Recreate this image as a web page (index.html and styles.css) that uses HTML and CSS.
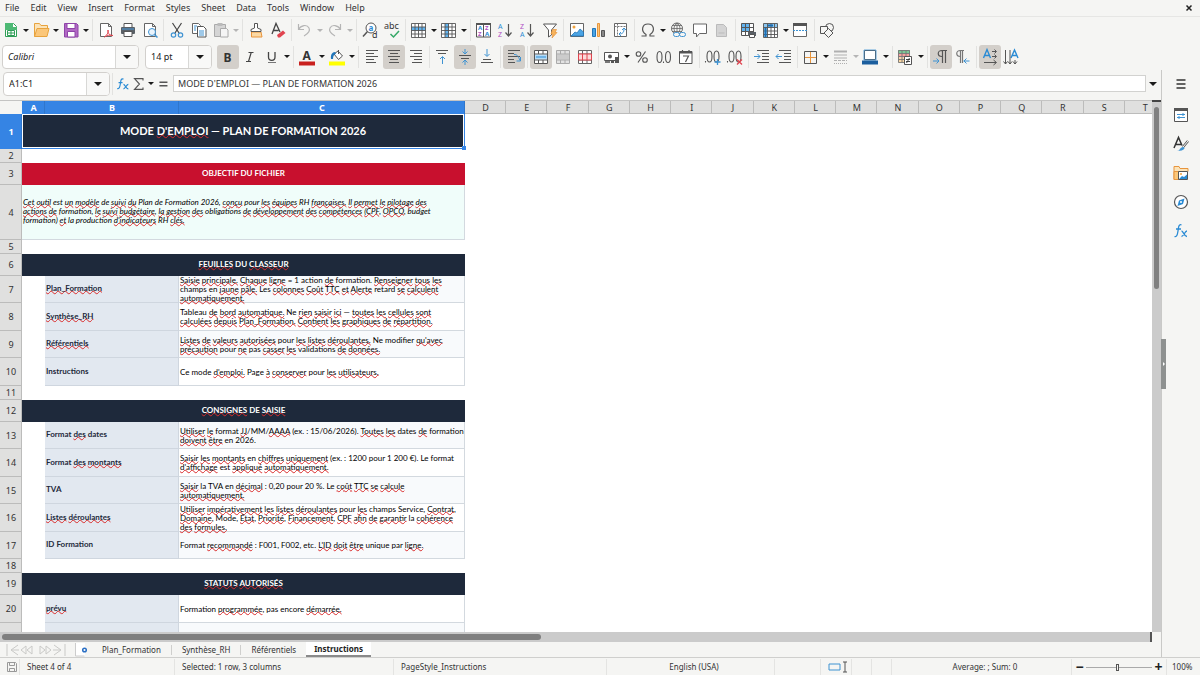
FILE: index.html
```html
<!DOCTYPE html>
<html lang="fr">
<head>
<meta charset="utf-8">
<title>Plan de formation 2026</title>
<link rel="stylesheet" href="styles.css">
</head>
<body>
<nav class="menubar">
  <button>File</button><button>Edit</button><button>View</button><button>Insert</button><button>Format</button><button>Styles</button><button>Sheet</button><button>Data</button><button>Tools</button><button>Window</button><button>Help</button>
  <button class="close" aria-label="Close document"><svg viewBox="0 0 8 8"><path d="M1.500 1.500l5 5M6.500 1.500l-5 5" stroke="#222" stroke-width="1.500"/></svg></button>
</nav>

<div class="toolbar standard">
  <button class="tb" aria-label="New"><svg viewBox="0 0 22 22"><path d="M5.500 4.500h8l3 3v10h-11z" fill="#fff" stroke="#2f9e57"/><path d="M5 4h8v4h4v3H5z" fill="#4db974"/><path d="M7.500 11.500h7v5h-7zM7.500 14h7M11 11.500v5" fill="none" stroke="#2f9e57"/></svg></button><button class="dd" aria-label="New options"></button>
  <button class="tb" aria-label="Open"><svg viewBox="0 0 22 22"><path d="M4.500 17.500v-13h5l1.500 2h6.500v3" fill="#fbe3b8" stroke="#e8a33d"/><path d="M4.500 17.500l2.500-8h12l-2 8z" fill="#fbc77a" stroke="#e8a33d"/></svg></button><button class="dd" aria-label="Open options"></button>
  <button class="tb" aria-label="Save"><svg viewBox="0 0 22 22"><path d="M4.500 4.500h12l1.500 1.500v12h-13.500z" fill="#b168c4" stroke="#8e44a8"/><path d="M7 4.500h8v5h-8zM7.500 12.500h7.500v5.500h-7.500z" fill="#fff" stroke="#8e44a8"/></svg></button><button class="dd" aria-label="Save options"></button>
  <span class="sep"></span>
  <button class="tb" aria-label="Export as PDF"><svg viewBox="0 0 22 22"><path d="M5.500 4.500h8l3 3v10h-11zM13.500 4.500v3h3" fill="#fff" stroke="#666"/><path d="M9.500 18c2.500-2 4-4 3.500-7 0 4 2 6 5 5.500-3-1-6 0-8.500 1.500z" fill="none" stroke="#e0444f"/></svg></button>
  <button class="tb" aria-label="Print"><svg viewBox="0 0 22 22"><path d="M7 8V4.500h8V8" fill="#fff" stroke="#555"/><rect x="4" y="8" width="14" height="7" rx="1" fill="#5a6066"/><path d="M7 12.500h8v5h-8z" fill="#fff" stroke="#555"/><path d="M5 10h12" stroke="#4a9bdc"/></svg></button>
  <button class="tb" aria-label="Print preview"><svg viewBox="0 0 22 22"><path d="M5.500 4.500h8l3 3v10h-11zM13.500 4.500v3h3" fill="#fff" stroke="#666"/><circle cx="13" cy="13" r="3.500" fill="#eaf4fc" stroke="#3f93d2"/><path d="M15.500 15.500l3 3" stroke="#3f93d2" stroke-width="1.500"/></svg></button>
  <span class="sep"></span>
  <button class="tb" aria-label="Cut"><svg viewBox="0 0 22 22" fill="none"><path d="M6.500 4l6.500 10M15.500 4L9 14" stroke="#444" stroke-width="1.200"/><circle cx="7.500" cy="16" r="2.200" stroke="#3f93d2" stroke-width="1.200"/><circle cx="14.500" cy="16" r="2.200" stroke="#3f93d2" stroke-width="1.200"/></svg></button>
  <button class="tb" aria-label="Copy"><svg viewBox="0 0 22 22"><path d="M4.500 4.500h6l2 2v8h-8z" fill="#fff" stroke="#666"/><path d="M9.500 7.500h6l2.500 2.500v8h-8.500z" fill="#fff" stroke="#555"/><path d="M6 7h3M6 9h2M6 11h2M11 12h5M11 14h5M11 16h5" stroke="#3f93d2"/></svg></button>
  <button class="tb off" aria-label="Paste" disabled><svg viewBox="0 0 22 22"><path d="M4.500 5.500h11v12h-11z" fill="#d5d5d5" stroke="#aaa"/><path d="M7.500 4h5v3h-5z" fill="#bbb"/><path d="M10.500 9.500h6l1.500 1.500v7h-7.500z" fill="#f5f5f5" stroke="#aaa"/></svg></button><button class="dd off" aria-label="Paste options" disabled></button>
  <span class="sep"></span>
  <button class="tb" aria-label="Clone formatting"><svg viewBox="0 0 22 22"><path d="M9.500 9V4.500h3V9l3.500 1.500v2h-10v-2z" fill="#fff" stroke="#555"/><path d="M6.500 13h9.500l1 5h-10.500z" fill="#fbd9a5" stroke="#e8953d"/><path d="M6 12.500h10" stroke="#555"/></svg></button>
  <button class="tb" aria-label="Clear formatting"><svg viewBox="0 0 22 22"><path d="M5 15l4-10.500L13 13M6.500 11.500h5" fill="none" stroke="#444" stroke-width="1.300"/><path d="M10 16l6-4.500 2.500 2.500-5.500 4.500h-2z" fill="#e0444f"/></svg></button>
  <span class="sep"></span>
  <button class="tb off" aria-label="Undo" disabled><svg viewBox="0 0 22 22" fill="none" stroke="#b5b5b5" stroke-width="1.200"><path d="M4.500 5v5.500H10M4.500 10.500C7 6 13 5 15 9c1.500 3-1.500 6-5 8"/></svg></button><button class="dd off" aria-label="Undo history" disabled></button>
  <button class="tb off" aria-label="Redo" disabled><svg viewBox="0 0 22 22" fill="none" stroke="#b5b5b5" stroke-width="1.200"><path d="M16.500 5v5.500H11M16.500 10.500C14 6 8 5 6 9c-1.500 3 1.500 6 5 8"/></svg></button><button class="dd off" aria-label="Redo history" disabled></button>
  <span class="sep"></span>
  <button class="tb" aria-label="Find and replace"><svg viewBox="0 0 22 22"><circle cx="12" cy="9" r="5" fill="#fff" stroke="#555"/><path d="M8.500 12.500L4 17.500" stroke="#555" stroke-width="1.500"/><text x="9.500" y="11.500" font-size="8" fill="#2a8bd4" font-weight="bold">a</text><text x="13" y="19" font-size="9" fill="#333">d</text></svg></button>
  <button class="tb" aria-label="Spelling"><svg viewBox="0 0 22 22"><text x="3" y="10" font-size="9" fill="#333">abc</text><path d="M9.500 15l3 3 5.500-6" fill="none" stroke="#35a867" stroke-width="1.500"/></svg></button>
  <span class="sep"></span>
  <button class="tb" aria-label="Row"><svg viewBox="0 0 22 22"><path d="M3.500 4.500h14v14h-14z" fill="#fff"/><path d="M3.500 8h14v3.500h-14z" fill="#62b3ee"/><path d="M3.500 4.500h14v14h-14zM3.500 8h14M3.500 11.500h14M3.500 15h14M7 4.500v14M10.500 4.500v14M14 4.500v14" fill="none" stroke="#555" stroke-width=".9"/></svg></button><button class="dd" aria-label="Row options"></button>
  <button class="tb" aria-label="Column"><svg viewBox="0 0 22 22"><path d="M3.500 4.500h14v14h-14z" fill="#fff"/><path d="M7 4.500h4v14h-4z" fill="#62b3ee"/><path d="M3.500 4.500h14v14h-14zM3.500 8h14M3.500 11.500h14M3.500 15h14M7 4.500v14M10.500 4.500v14M14 4.500v14" fill="none" stroke="#555" stroke-width=".9"/></svg></button><button class="dd" aria-label="Column options"></button>
  <span class="sep"></span>
  <button class="tb" aria-label="Sort"><svg viewBox="0 0 22 22" font-size="6" font-weight="bold"><path d="M3.500 4.500h14v13.500h-14zM10.500 5v13" fill="#fff" stroke="#555"/><path d="M3 5h15" stroke="#555" stroke-width="2"/><text x="5" y="11" fill="#2a8bd4">A</text><text x="5" y="17" fill="#b04fc4">Z</text><text x="12" y="11" fill="#b04fc4">Z</text><text x="12" y="17" fill="#2a8bd4">A</text></svg></button>
  <button class="tb" aria-label="Sort ascending"><svg viewBox="0 0 22 22" font-size="7"><text x="3" y="10" fill="#2a8bd4">A</text><text x="3" y="18" fill="#b04fc4">Z</text><path d="M13.500 5v12M10.500 13.500l3 3.500 3-3.500" fill="none" stroke="#555" stroke-width="1.200"/></svg></button>
  <button class="tb" aria-label="Sort descending"><svg viewBox="0 0 22 22" font-size="7"><text x="3" y="10" fill="#b04fc4">Z</text><text x="3" y="18" fill="#2a8bd4">A</text><path d="M13.500 5v12M10.500 13.500l3 3.500 3-3.500" fill="none" stroke="#555" stroke-width="1.200"/></svg></button>
  <button class="tb" aria-label="AutoFilter"><svg viewBox="0 0 22 22"><path d="M4.500 5h13l-5 6v5l-3 2v-7z" fill="#fff" stroke="#555"/><path d="M13.500 10.500h4l-1.500 3h2l-5 5.500 1-4h-2z" fill="#f7b55e" stroke="#e8953d" stroke-width=".7"/></svg></button>
  <span class="sep"></span>
  <button class="tb" aria-label="Image"><svg viewBox="0 0 22 22"><path d="M4.500 4.500h13v13h-13z" fill="#fff" stroke="#666"/><circle cx="8" cy="8" r="1.500" fill="#f2a33c"/><path d="M5 17l4-4 2 1 3-4 3.500 3v4z" fill="#4ba4e4" stroke="#2176ba" stroke-width=".8"/></svg></button>
  <button class="tb" aria-label="Chart"><svg viewBox="0 0 22 22"><path d="M4.500 9.500h3v8h-3z" fill="#4ba4e4" stroke="#2176ba"/><path d="M9.500 4.500h2v13h-2z" fill="#fbc77a" stroke="#e8953d"/><path d="M13.500 11.500h3v6h-3z" fill="#888" stroke="#555"/></svg></button>
  <button class="tb" aria-label="Pivot table"><svg viewBox="0 0 22 22" fill="none"><path d="M4.500 4.500h12v13h-12z" fill="#fff" stroke="#666"/><path d="M4.500 7.500h12M7.500 4.500v13" stroke="#777" stroke-dasharray="2 1"/><path d="M9 15c4 0 5-2 5-5M12 11l2-2 2 2M11 13l-2 2 2 2" stroke="#3f93d2"/></svg></button>
  <span class="sep"></span>
  <button class="tb" aria-label="Special character"><svg viewBox="0 0 22 22" fill="none" stroke="#555" stroke-width="1.200"><path d="M4.500 17h4.500v-1.500C3.500 12 5 5 11 5s7.500 7 2 10.500V17h4.500"/></svg></button><button class="dd" aria-label="Special character options"></button>
  <button class="tb" aria-label="Hyperlink"><svg viewBox="0 0 22 22" fill="none"><circle cx="10" cy="9.500" r="5.500" stroke="#666"/><path d="M10 4v11M4.500 9.500h11M5.500 6.500h9M5.500 12.500h9M10 4c-4 3-4 8 0 11M10 4c4 3 4 8 0 11" stroke="#666" stroke-width=".8"/><rect x="6.500" y="13.500" width="6" height="4" rx="2" fill="#f5f5f3" stroke="#3f93d2"/><rect x="12.500" y="13.500" width="6" height="4" rx="2" fill="#f5f5f3" stroke="#3f93d2"/></svg></button>
  <button class="tb" aria-label="Comment"><svg viewBox="0 0 22 22"><path d="M4.500 5h13v9.500h-7l-3 3.500v-3.500h-3z" fill="#fff" stroke="#666"/></svg></button>
  <button class="tb off" aria-label="Headers and footers" disabled><svg viewBox="0 0 22 22"><path d="M5.500 5.500h7l3 3v9h-10z" fill="#d4d4d4" stroke="#bbb"/><path d="M7.500 14h6" stroke="#bbb"/></svg></button>
  <span class="sep"></span>
  <button class="tb" aria-label="Print area"><svg viewBox="0 0 22 22"><path d="M3.500 4.500h12v12h-12z" fill="#fff"/><path d="M3.500 4.500h8v8h-8z" fill="#62b3ee"/><path d="M3.500 4.500h12v12h-12zM3.500 8.500h12M3.500 12.500h12M7.500 4.500v12M11.500 4.500v12" fill="none" stroke="#555"/><path d="M10 13h8v4h-8z" fill="#5a6066"/><path d="M11.500 15.500h5v3h-5z" fill="#fff" stroke="#555"/></svg></button>
  <button class="tb" aria-label="Freeze rows and columns"><svg viewBox="0 0 22 22"><path d="M3.500 4.500h14v14h-14z" fill="#fff"/><path d="M3.500 4.500h14v4h-14zM3.500 4.500h4v14h-4z" fill="#8cc8f2"/><path d="M3.500 4.500h14v14h-14zM7.500 4.500v14M3.500 8.500h14M11 4.500v14M14.500 4.500v14M3.500 12h14M3.500 15.500h14" fill="none" stroke="#555" stroke-width=".9"/><path d="M5.500 9v9M8 6.500h5" stroke="#1b6fb5" stroke-width="2"/></svg></button><button class="dd" aria-label="Freeze options"></button>
  <button class="tb" aria-label="Split window"><svg viewBox="0 0 22 22"><path d="M3.500 4.500h13v13h-13z" fill="#fff" stroke="#666"/><path d="M3 5.500h14" stroke="#555" stroke-width="3"/><path d="M3 11.500h14" stroke="#3f93d2" stroke-dasharray="2 1"/></svg></button>
  <span class="sep"></span>
  <button class="tb" aria-label="Show draw functions"><svg viewBox="0 0 22 22" fill="#f5f5f3" stroke="#555"><circle cx="12.500" cy="8.500" r="4"/><path d="M3.500 7.500h7v7h-7z"/><path d="M11.500 9.500l4.500 4.500-4.500 4.500L7 14z"/></svg></button>
</div>

<div class="toolbar formatting">
  <div class="combo font"><input aria-label="Font name" value="Calibri"><button aria-label="Font list"></button></div>
  <div class="combo size"><input aria-label="Font size" value="14 pt"><button aria-label="Size list"></button></div>
  <button class="tb on" aria-label="Bold"><svg viewBox="0 0 22 22"><text x="6.500" y="15.500" font-size="12" font-weight="bold" fill="#333">B</text></svg></button>
  <button class="tb" aria-label="Italic"><svg viewBox="0 0 22 22"><path d="M9.500 6.500h5M7 15.500h5M12.200 6.500L9.500 15.500" stroke="#444" stroke-width="1.200"/></svg></button>
  <button class="tb" aria-label="Underline"><svg viewBox="0 0 22 22" fill="none"><path d="M7.500 6v5c0 4.500 6.500 4.500 6.500 0V6" stroke="#444" stroke-width="1.300"/><path d="M7 16.500h8" stroke="#777"/></svg></button><button class="dd" aria-label="Underline options"></button>
  <span class="sep"></span>
  <button class="tb" aria-label="Font color"><svg viewBox="0 0 22 22"><text x="6.500" y="13.500" font-size="12" font-weight="bold" fill="#333">A</text><path d="M3 15.500h16v4H3z" fill="#c9211e"/></svg></button><button class="dd" aria-label="Font color options"></button>
  <button class="tb" aria-label="Background color"><svg viewBox="0 0 22 22"><path d="M8 8l4.500 5.500 4-3.500-4.500-5z" fill="#fff" stroke="#555"/><path d="M5 13c-.5-4 1-7 4-7l1 2c-2 0-3 2-3 5z" fill="#2176ba"/><path d="M12.500 4v4" stroke="#555"/><path d="M3 15.500h16v4H3z" fill="#ff0"/></svg></button><button class="dd" aria-label="Background color options"></button>
  <span class="sep"></span>
  <button class="tb" aria-label="Align left"><svg viewBox="0 0 22 22" stroke="#555"><path d="M5 4.500h12M5 7.500h8M5 10.500h12M5 13.500h8M5 16.500h10"/></svg></button>
  <button class="tb on" aria-label="Center horizontally"><svg viewBox="0 0 22 22" stroke="#555"><path d="M5 4.500h12M7 7.500h8M5 10.500h12M7 13.500h8M6 16.500h10"/></svg></button>
  <button class="tb" aria-label="Align right"><svg viewBox="0 0 22 22" stroke="#555"><path d="M5 4.500h12M9 7.500h8M5 10.500h12M9 13.500h8M7 16.500h10"/></svg></button>
  <span class="sep"></span>
  <button class="tb" aria-label="Align top"><svg viewBox="0 0 22 22" fill="none"><path d="M4 4.500h12M6 7.500h8" stroke="#555"/><path d="M10.500 18v-7M8 13l2.500-2.500L13 13" stroke="#3f93d2"/></svg></button>
  <button class="tb on" aria-label="Center vertically"><svg viewBox="0 0 22 22" fill="none"><path d="M5 9.500h12M7 12.500h8" stroke="#555"/><path d="M11 3v5M8.500 5.500L11 8l2.500-2.500M11 19v-5M8.500 16.500L11 14l2.500 2.500" stroke="#3f93d2"/></svg></button>
  <button class="tb" aria-label="Align bottom"><svg viewBox="0 0 22 22" fill="none"><path d="M5 16.500h12M7 13.500h8" stroke="#555"/><path d="M11 3v7M8.500 8L11 10.500 13.500 8" stroke="#3f93d2"/></svg></button>
  <span class="sep"></span>
  <button class="tb on" aria-label="Wrap text"><svg viewBox="0 0 22 22" fill="none"><path d="M5 4.500h12M5 7.500h6M5 10.500h12M5 13.500h6M5 16.500h7" stroke="#555"/><path d="M11 8.500c3 0 4 1 6 6M17.500 11v4h-4" stroke="#3f93d2"/></svg></button>
  <span class="sep"></span>
  <button class="tb on" aria-label="Merge and center cells"><svg viewBox="0 0 22 22"><path d="M4.500 4.500h13v13h-13z" fill="#fff"/><path d="M4.500 8.500h13v5h-13z" fill="#b5dcf8"/><path d="M4.500 4.500h13v13h-13zM4.500 8h13M4.500 14h13M8.500 4.500V8M13 4.500V8M8.500 14v3.500M13 14v3.500" fill="none" stroke="#555"/><path d="M6 11h10" stroke="#2a8bd4"/></svg></button>
  <button class="tb off" aria-label="Merge cells" disabled><svg viewBox="0 0 22 22"><path d="M4.500 4.500h13v13h-13z" fill="#e2e2e2"/><path d="M4.500 8.500h13v5h-13z" fill="#ccc"/><path d="M4.500 4.500h13v13h-13zM4.500 8h13M4.500 14h13M8.500 4.500V8M13 4.500V8M8.500 14v3.500M13 14v3.500" fill="none" stroke="#aaa"/></svg></button>
  <button class="tb" aria-label="Unmerge cells"><svg viewBox="0 0 22 22"><path d="M4.500 4.500h13v13h-13zM4.500 8h13M4.500 14h13M8.500 4.500v13M13 4.500v13" fill="#fff" stroke="#666"/><path d="M4.500 8h13v6h-13zM8.500 8v6M13 8v6" fill="#fbdada" stroke="#e0444f"/></svg></button>
  <span class="sep"></span>
  <button class="tb" aria-label="Format as currency"><svg viewBox="0 0 22 22"><path d="M3.500 6.500h14v8h-14z" fill="#fff" stroke="#555"/><circle cx="9" cy="10.500" r="2" fill="#555"/><path d="M10 14h3v3h-3zM14 11h4v6h-4z" fill="#555"/><path d="M4 15h5v2H4z" fill="#777"/></svg></button><button class="dd" aria-label="Currency options"></button>
  <button class="tb" aria-label="Format as percent"><svg viewBox="0 0 22 22" fill="none" stroke="#555" stroke-width="1.100"><circle cx="7.500" cy="8" r="2.300"/><circle cx="14" cy="14" r="2.300"/><path d="M14.500 5.500l-7.500 11"/></svg></button>
  <button class="tb" aria-label="Format as number"><svg viewBox="0 0 22 22" fill="none" stroke="#555" stroke-width="1.100"><ellipse cx="6.500" cy="11" rx="2.500" ry="5.500"/><ellipse cx="15" cy="11" rx="2.500" ry="5.500"/><path d="M10.500 15.500v1.500"/></svg></button>
  <button class="tb" aria-label="Format as date"><svg viewBox="0 0 22 22" fill="none" stroke="#555"><path d="M4.500 5.500h12.500v12h-12.500z" fill="#fff"/><path d="M4.500 6.500h12.500" stroke-width="2"/><path d="M7.500 4v2M14 4v2M8 10h5.500l-3 6" stroke-width="1.200"/></svg></button>
  <span class="sep"></span>
  <button class="tb" aria-label="Add decimal place"><svg viewBox="0 0 22 22" fill="none" stroke="#555" stroke-width="1.100"><ellipse cx="7.500" cy="10.500" rx="2.500" ry="5.500"/><ellipse cx="14.500" cy="10.500" rx="2.500" ry="5.500"/><path d="M3.500 15v1.500"/><path d="M12.500 16h6M15.500 13v6" stroke="#3f93d2" stroke-width="1.300"/></svg></button>
  <button class="tb" aria-label="Delete decimal place"><svg viewBox="0 0 22 22" fill="none" stroke="#555" stroke-width="1.100"><ellipse cx="7.500" cy="10.500" rx="2.500" ry="5.500"/><ellipse cx="14.500" cy="10.500" rx="2.500" ry="5.500"/><path d="M3.500 15v1.500"/><path d="M13 13.500l5 5M18 13.500l-5 5" stroke="#e0444f" stroke-width="1.300"/></svg></button>
  <span class="sep"></span>
  <button class="tb" aria-label="Increase indent"><svg viewBox="0 0 22 22" fill="none"><path d="M6 4.500h12M11 7.500h7M11 10.500h7M11 13.500h7M6 16.500h12" stroke="#555"/><path d="M3 10.500h6M6.500 8L9 10.500 6.500 13" stroke="#3f93d2"/></svg></button>
  <button class="tb" aria-label="Decrease indent"><svg viewBox="0 0 22 22" fill="none"><path d="M6 4.500h12M11 7.500h7M11 10.500h7M11 13.500h7M6 16.500h12" stroke="#555"/><path d="M3 10.500h6M5.500 8L3 10.500 5.500 13" stroke="#3f93d2"/></svg></button>
  <span class="sep"></span>
  <button class="tb" aria-label="Borders"><svg viewBox="0 0 22 22" fill="none"><path d="M10.500 6v11M5 11.500h11" stroke="#e8953d"/><path d="M4.500 5.500h12v12h-12z" stroke="#555"/></svg></button><button class="dd" aria-label="Border options"></button>
  <button class="tb off" aria-label="Border style" disabled><svg viewBox="0 0 22 22" stroke="#b0b0b0"><path d="M4 5.500h13" stroke-width="2"/><path d="M4 9h13M4 12h13"/><path d="M4 14.500h13" stroke-dasharray="3 1"/><path d="M4 17.500h13" stroke-dasharray="1 1"/></svg></button><button class="dd off" aria-label="Border style options" disabled></button>
  <button class="tb" aria-label="Border color"><svg viewBox="0 0 22 22"><path d="M4.500 4.500h11v9h-11z" fill="#fff" stroke="#555"/><path d="M4 4h12v10H4z" fill="none" stroke="#3f93d2" stroke-width=".8"/><path d="M2 14.500h16v4H2z" fill="#1b5e9e"/></svg></button><button class="dd" aria-label="Border color options"></button>
  <span class="sep"></span>
  <button class="tb" aria-label="Conditional formatting"><svg viewBox="0 0 22 22"><path d="M3 4h12v3.500H3z" fill="#7ccb98"/><path d="M3 7.500h12v4H3z" fill="#f7a0a0"/><path d="M3 11.500h12v5H3z" fill="#fbd9a5"/><path d="M3.500 4.500h11v12h-11zM3.500 7.500h11M3.500 10.500h11M3.500 13.500h11M7 4.500v12M11 4.500v12" fill="none" stroke="#777" stroke-width=".9"/><path d="M9.500 10.500h7v8h-7z" fill="#fff" stroke="#555"/><path d="M11 13.500h4M11 15.500h4M14.500 12l-3 5" stroke="#333" stroke-width=".9"/></svg></button><button class="dd" aria-label="Conditional options"></button>
  <span class="sep"></span>
  <button class="tb on" aria-label="Left-to-right"><svg viewBox="0 0 22 22" fill="none"><path d="M17 4.500h-5c-5 0-5 6 0 6M12.500 4.500v12.500M15.500 4.500v12.500" stroke="#555" stroke-width="1.200"/><path d="M3 15h6M6.500 12.500L9 15l-2.500 2.500" stroke="#3f93d2"/></svg></button>
  <button class="tb" aria-label="Right-to-left"><svg viewBox="0 0 22 22" fill="none"><path d="M12 4.500H8.500c-5 0-5 6 0 6M8.500 4.500v12.500M10.500 4.500v12.500" stroke="#777" stroke-width="1.200"/><path d="M11.500 15h6M14.500 12.500L12 15l2.500 2.500" stroke="#3f93d2"/></svg></button>
  <span class="sep"></span>
  <button class="tb on" aria-label="Text left to right"><svg viewBox="0 0 22 22" fill="none"><path d="M4.500 12L8 3.500 11.500 12M5.800 9.500h4.500" stroke="#2a8bd4" stroke-width="1.400"/><path d="M13 5.500h4M13 10.500h4M5 16.500h12M15.500 3.500l2 2-2 2M15.500 8.500l2 2-2 2M14.500 14l3 2.500-3 2.500" stroke="#555"/></svg></button>
  <button class="tb" aria-label="Text top to bottom"><svg viewBox="0 0 22 22" fill="none"><path d="M10 12l3.500-8L17 12M11.300 9.500h4.500" stroke="#2a8bd4" stroke-width="1.400"/><path d="M4.500 4v14M9 4v14M14 14v4M2.500 15.500l2 2.500 2-2.500M7 15.500l2 2.500 2-2.500M12 15.500l2 2.500 2-2.500" stroke="#555"/></svg></button>
</div>

<div class="main">
  <div class="document">
    <div class="formulabar">
      <div class="combo name"><input aria-label="Name box" value="A1:C1"><button aria-label="Named ranges"></button></div>
      <span class="sep"></span>
      <button class="fn" aria-label="Function wizard"><svg viewBox="0 0 18 18" fill="none" stroke="#2a8bd4" stroke-width="1.300"><path d="M9.500 3.500C6.500 2 6.500 6 6 9s-1 6-3.500 5M4 7.500h4.500M9.500 9.500c2 0 2.500 5 5.500 5M15 9.500c-2 0-3.500 5-5.500 5"/></svg></button>
      <button class="fn" aria-label="Select function"><svg viewBox="0 0 18 18" fill="none" stroke="#555" stroke-width="1.300"><path d="M13.500 5V3H4l5.500 6L4 15h9.500v-2"/></svg></button><button class="dd" aria-label="Function options"></button>
      <button class="fn" aria-label="Formula"><svg viewBox="0 0 18 18" stroke="#555" stroke-width="1.700"><path d="M5 7h9M5 11h9"/></svg></button>
      <input class="formula" aria-label="Formula input" value="MODE D'EMPLOI — PLAN DE FORMATION 2026">
      <button class="expand" aria-label="Expand formula bar"></button>
    </div>

    <div class="sheetarea">
      <div class="viewport">
        <table class="sheet">
          <colgroup><col class="c-head"><col class="c-a"><col class="c-b"><col class="c-c"><col><col><col><col><col><col><col><col><col><col><col><col><col><col><col><col><col></colgroup>
          <thead>
            <tr><td class="corner"></td><th class="act">A</th><th class="act">B</th><th class="act">C</th><th>D</th><th>E</th><th>F</th><th>G</th><th>H</th><th>I</th><th>J</th><th>K</th><th>L</th><th>M</th><th>N</th><th>O</th><th>P</th><th>Q</th><th>R</th><th>S</th><th>T</th></tr>
          </thead>
          <tbody>
            <tr class="h-title"><th class="act">1</th><td colspan="3" class="title">MODE <u>D'EMPLOI</u> — PLAN DE FORMATION 2026<span class="handle"></span></td></tr>
            <tr class="h-gap"><th>2</th></tr>
            <tr class="h-band"><th>3</th><td colspan="3" class="band red">OBJECTIF DU FICHIER</td></tr>
            <tr class="h-note"><th>4</th><td colspan="3" class="note"><u>Cet</u> <u>outil</u> est <u>un</u> <u>modèle</u> de <u>suivi</u> <u>du</u> Plan de Formation 2026, <u>conçu</u> pour <u>les</u> <u>équipes</u> RH <u>françaises.</u> <u>Il</u> <u>permet</u> <u>le</u> <u>pilotage</u> <u>des</u><br><u>actions</u> <u>de</u> formation, <u>le</u> <u>suivi</u> <u>budgétaire</u>, <u>la</u> <u>gestion</u> <u>des</u> obligations <u>de</u> <u>développement</u> <u>des</u> <u>compétences</u> <u>(CPF</u>, <u>OPCO</u>, budget<br>formation) <u>et</u> la production <u>d'indicateurs</u> RH <u>clés.</u></td></tr>
            <tr class="h-gap"><th>5</th></tr>
            <tr class="h-band"><th>6</th><td colspan="3" class="band"><u>FEUILLES</u> DU <u>CLASSEUR</u></td></tr>
            <tr class="h-odd tint"><th>7</th><td></td><td class="label"><u>Plan_Formation</u></td><td class="text"><u>Saisie</u> <u>principale.</u> <u>Chaque</u> <u>ligne</u> = 1 action <u>de</u> formation. <u>Renseigner</u> <u>tous</u> <u>les</u><br>champs en <u>jaune</u> <u>pâle.</u> Les <u>colonnes</u> <u>Coût</u> <u>TTC</u> <u>et</u> <u>Alerte</u> retard <u>se</u> <u>calculent</u><br><u>automatiquement.</u></td></tr>
            <tr class="h-even"><th>8</th><td></td><td class="label"><u>Synthèse_RH</u></td><td class="text">Tableau <u>de</u> <u>bord</u> <u>automatique.</u> Ne <u>rien</u> <u>saisir</u> <u>ici</u> — <u>toutes</u> <u>les</u> <u>cellules</u> <u>sont</u><br><u>calculées</u> <u>depuis</u> <u>Plan_Formation.</u> <u>Contient</u> <u>les</u> <u>graphiques</u> <u>de</u> <u>répartition.</u></td></tr>
            <tr class="h-odd tint"><th>9</th><td></td><td class="label"><u>Référentiels</u></td><td class="text"><u>Listes</u> <u>de</u> <u>valeurs</u> <u>autorisées</u> pour <u>les</u> <u>listes</u> <u>déroulantes.</u> Ne modifier <u>qu'avec</u><br><u>précaution</u> pour <u>ne</u> pas <u>casser</u> <u>les</u> validations <u>de</u> <u>données.</u></td></tr>
            <tr class="h-even"><th>10</th><td></td><td class="label">Instructions</td><td class="text">Ce mode <u>d'emploi.</u> Page <u>à</u> <u>conserver</u> pour <u>les</u> <u>utilisateurs.</u></td></tr>
            <tr class="h-gap"><th>11</th></tr>
            <tr class="h-band"><th>12</th><td colspan="3" class="band"><u>CONSIGNES</u> DE <u>SAISIE</u></td></tr>
            <tr class="h-odd tint"><th>13</th><td></td><td class="label">Format <u>des</u> dates</td><td class="text"><u>Utiliser</u> <u>le</u> format <u>JJ</u>/MM/<u>AAAA</u> (ex. : 15/06/2026). <u>Toutes</u> <u>les</u> dates <u>de</u> formation<br><u>doivent</u> <u>être</u> en 2026.</td></tr>
            <tr class="h-even"><th>14</th><td></td><td class="label">Format <u>des</u> <u>montants</u></td><td class="text"><u>Saisir</u> <u>les</u> <u>montants</u> en <u>chiffres</u> <u>uniquement</u> (ex. : 1200 pour 1 200 €). Le format<br><u>d'affichage</u> est <u>appliqué</u> <u>automatiquement.</u></td></tr>
            <tr class="h-odd tint"><th>15</th><td></td><td class="label">TVA</td><td class="text"><u>Saisir</u> la TVA en <u>décimal</u> : 0,20 pour 20 %. Le <u>coût</u> <u>TTC</u> <u>se</u> <u>calcule</u><br><u>automatiquement.</u></td></tr>
            <tr class="h-even"><th>16</th><td></td><td class="label"><u>Listes</u> <u>déroulantes</u></td><td class="text"><u>Utiliser</u> <u>impérativement</u> <u>les</u> <u>listes</u> <u>déroulantes</u> pour <u>les</u> champs Service, <u>Contrat</u>,<br><u>Domaine</u>, Mode, <u>État</u>, <u>Priorité</u>, <u>Financement</u>, <u>CPF</u> <u>afin</u> <u>de</u> <u>garantir</u> la <u>cohérence</u><br><u>des</u> <u>formules.</u></td></tr>
            <tr class="h-odd tint"><th>17</th><td></td><td class="label">ID Formation</td><td class="text">Format <u>recommandé</u> : F001, F002, etc. <u>L'ID</u> <u>doit</u> <u>être</u> unique par <u>ligne.</u></td></tr>
            <tr class="h-gap"><th>18</th></tr>
            <tr class="h-band"><th>19</th><td colspan="3" class="band"><u>STATUTS</u> <u>AUTORISÉS</u></td></tr>
            <tr class="h-even"><th>20</th><td></td><td class="label"><u>prévu</u></td><td class="text">Formation <u>programmée</u>, pas encore <u>démarrée.</u></td></tr>
            <tr class="h-even tint"><th></th><td></td><td class="label"></td><td class="text">Formation <u>validée</u>, <u>planifiée</u> et <u>confirmée.</u></td></tr>
          </tbody>
        </table>
      </div>
      <div class="vscroll"><div class="vthumb"></div></div>
    </div>
    <div class="hscroll"><div class="htrack"><div class="hthumb"></div></div></div>

    <div class="tabs">
      <svg class="tabnav" viewBox="0 0 60 14" fill="none" stroke="#c9c9c7"><path d="M1 1v12M12 2L5 7l7 5M5 7h8M26 3l-5 4 5 4zM20 3l-5 4 5 4zM34 3l5 4-5 4zM40 3l5 4-5 4zM48 2l7 5-7 5M47 7h8M59 1v12"/></svg>
      <button class="addtab" aria-label="Add sheet"><svg viewBox="0 0 14 14"><path d="M1 0h10v13H1z" fill="#fff"/><path d="M1.500 0v13h9" fill="none" stroke="#ccc"/><circle cx="10.500" cy="7" r="1.800" fill="#fff" stroke="#2a6fc4" stroke-width="1.500"/></svg></button>
      <button class="tab">Plan_Formation</button><button class="tab">Synthèse_RH</button><button class="tab">Référentiels</button><button class="tab current">Instructions</button>
    </div>
  </div>

  <aside class="sidebar">
    <button class="grip" aria-label="Hide sidebar"></button>
    <button class="deck menu" aria-label="Sidebar settings"><svg viewBox="0 0 18 18" stroke="#333" stroke-width="1.500"><path d="M4.500 5h9M4.500 9h9M4.500 13h9"/></svg></button>
    <button class="deck" aria-label="Properties"><svg viewBox="0 0 18 18"><path d="M2.500 2.500h13v13h-13z" fill="#fff" stroke="#555"/><path d="M2 3.500h14" stroke="#555" stroke-width="3"/><path d="M5 8.500h8M5 11.500h8M11 7v3M7 10v3" stroke="#3f93d2"/></svg></button>
    <button class="deck" aria-label="Styles"><svg viewBox="0 0 18 18" fill="none"><path d="M2 13L6.500 2.500 10 10.500M4 9.500h5" stroke="#333" stroke-width="1.500"/><path d="M16 6l-5 6" stroke="#555" stroke-width="2.500"/><path d="M16 6l-5 6" stroke="#fff"/><path d="M5 16c3 0 3-4 6-4s2 4-6 4z" fill="#3f93d2"/></svg></button>
    <button class="deck" aria-label="Gallery"><svg viewBox="0 0 18 18"><path d="M2 15.500v-13h5l1 2h8v3" fill="#fbe3b8" stroke="#e8953d"/><path d="M2 15.500v-8h5v8z" fill="#fbc77a" stroke="#e8953d"/><path d="M6.500 7.500h9v8h-9z" fill="#fff" stroke="#555"/><path d="M7 15l3-3 2 1 3-2.500V15z" fill="#2a8bd4"/><circle cx="9" cy="10" r="1" fill="#f2a33c"/></svg></button>
    <button class="deck" aria-label="Navigator"><svg viewBox="0 0 18 18"><circle cx="9" cy="9" r="6.500" fill="#fff" stroke="#555" stroke-width="1.200"/><path d="M12.500 5.500l-1.500 5.500-5.500 2 1.500-5.500z" fill="#2a8bd4"/><circle cx="9" cy="9" r="1" fill="#fff"/></svg></button>
    <button class="deck" aria-label="Functions"><svg viewBox="0 0 18 18" fill="none" stroke="#2a8bd4" stroke-width="1.300"><path d="M9.500 3C6.500 1.500 6.500 6 6 9s-1 6.500-3.500 5.500M4 7h5M9.500 9c2 0 2.500 5.500 5.500 5.500M15 9c-2 0-3.500 5.500-5.500 5.500"/></svg></button>
  </aside>
</div>

<footer class="status">
  <span class="s-save"><svg viewBox="0 0 12 12" fill="none" stroke="#999"><path d="M1.500 1.500h8l1 1v8h-9zM3.500 1.500v3h5v-3M3.500 10.500v-3h5v3"/></svg></span>
  <span class="s-sheet">Sheet 4 of 4</span>
  <span class="s-sel">Selected: 1 row, 3 columns</span>
  <span class="s-style">PageStyle_Instructions</span>
  <span class="s-lang">English (USA)</span>
  <span class="s-insert"></span>
  <span class="s-mode"><svg viewBox="0 0 20 12" fill="none"><path d="M1 3h11v6H1z" stroke="#3f93d2"/><path d="M15 1h4M15 11h4M17 1v10" stroke="#555"/></svg></span>
  <span class="s-small"></span>
  <span class="s-small"></span>
  <span class="s-sum">Average: ; Sum: 0</span>
  <span class="s-zoom"><button aria-label="Zoom out">−</button><input type="range" aria-label="Zoom" value="48"><button aria-label="Zoom in">+</button></span>
  <span class="s-pct">100%</span>
</footer>
</body>
</html>
```
FILE: styles.css
```css
* { box-sizing: border-box; }

body {
  margin: 0;
  height: 100vh;
  display: flex;
  flex-direction: column;
  overflow: hidden;
  background: #f5f5f3;
  color: #333;
  font: 9px/12px "Noto Sans", sans-serif;
}

button, input { font: inherit; color: inherit; }
button { padding: 0; border: 0; background: none; }
svg { display: block; }

/* Menu bar */
.menubar {
  flex: none;
  display: flex;
  align-items: center;
  gap: 11px;
  height: 17px;
  padding-left: 5px;
  border-bottom: 1px solid #e6e6e4;
}
.close { margin: 0 7px 0 auto; }
.close svg { width: 8px; height: 8px; }

/* Toolbars */
.toolbar { flex: none; display: flex; align-items: center; }
.standard { height: 26px; }
.formatting { height: 27px; }
.tb { width: 22px; height: 24px; border-radius: 3px; flex: none; }
.tb svg { width: 22px; height: 22px; }
.tb.on { background: #d3cfca; }
.sep { flex: none; width: 1px; height: 22px; margin: 0 2px; background: #e2e2e0; }
.dd { flex: none; width: 8px; height: 20px; display: grid; place-items: center; }
.dd::before,
.combo button::before,
.expand::before {
  content: "";
  border: 3px solid transparent;
  border-top-color: #1a1a1a;
  border-bottom: 0;
}
.dd.off::before { border-top-color: #b5b5b5; }
.combo {
  flex: none;
  display: flex;
  height: 24px;
  border: 1px solid #d2d0cd;
  border-radius: 4px;
  background: #fff;
  overflow: hidden;
}
.combo input { flex: 1; min-width: 0; border: 0; padding: 0 5px; background: none; color: #222; }
.combo button { width: 23px; border-left: 1px solid #d8d8d6; background: #f8f8f7; display: grid; place-items: center; }
.combo button::before, .expand::before { border-width: 4px 4px 0; }
.font { width: 137px; margin: 0 6px 0 2px; }
.font input { font-style: italic; }
.size { width: 67px; margin-right: 5px; }

/* Body of the window */
.main { flex: 1; min-height: 0; display: flex; }
.document { flex: 1; min-width: 0; display: flex; flex-direction: column; }

.formulabar { flex: none; height: 30px; display: flex; align-items: center; padding: 0 2px 3px 3px; }
.name { width: 107px; }
.fn { width: 16px; height: 16px; flex: none; }
.fn svg { width: 16px; height: 16px; }
.formula { flex: 1; min-width: 0; height: 17px; margin-left: 2px; padding: 0 4px; border: 1px solid #d2d2d0; background: #fff; }
.expand { width: 13px; height: 18px; display: grid; place-items: center; }

/* Spreadsheet */
.sheetarea { flex: 1; min-height: 0; display: flex; }
.viewport { flex: 1; min-width: 0; overflow: hidden; background: #fff; }
.sheet {
  width: calc(100% + 14px);
  table-layout: fixed;
  border-spacing: 0;
}
.c-head { width: 22px; }
.c-a { width: 23px; }
.c-b { width: 134px; }
.c-c { width: 286px; }
.sheet td, .sheet th { padding: 0; font-weight: normal; }
.sheet thead tr { height: 14px; }
.sheet th { background: #e0e0df; box-shadow: inset -1px -1px #bcbcbb; }
.sheet thead th, .corner { line-height: 12px; border-top: 1px solid #c4c4c3; }
.corner { background: #f5f5f3; }
.sheet tbody th { line-height: 12px; }
.sheet th.act { background: #3584e4; color: #fff; font-weight: bold; box-shadow: inset -1px 0 #2f76cc; }
.sheet td { font-family: Lato, sans-serif; white-space: nowrap; color: #000; }

.h-title { height: 35px; }
.h-gap { height: 14px; }
.h-band { height: 22px; }
.h-note { height: 55px; }
.h-odd { height: 27px; }
.h-even { height: 28px; }

.sheet .title {
  position: relative;
  text-align: center;
  background: #1e293b;
  color: #fff;
  font-size: 11px;
  font-weight: bold;
  line-height: 16px;
  padding-bottom: 1px;
  border-bottom: 1px solid #3584e4;
  border-right: 1px solid #3584e4;
  box-shadow: inset 0 0 0 1px #fff;
}
.handle { position: absolute; right: -2px; bottom: -2px; width: 4px; height: 4px; background: #3584e4; }
.sheet .band { text-align: center; background: #1e293b; color: #fff; font-size: 8px; font-weight: bold; line-height: 12px; padding-bottom: 2px; }
.sheet .red { background: #c8102e; }
.sheet .note { background: #f0fdfa; font-size: 8px; line-height: 9px; font-style: italic; padding: 0 0 2px 1px; box-shadow: inset -1px -1px #d3d9df; }
.sheet .label { background: #e2e8f0; color: #1e293b; font-size: 8px; line-height: 9px; font-weight: bold; padding: 0 0 2px 1px; box-shadow: inset -1px -1px #cfd6df; }
.sheet .text { font-size: 8px; line-height: 9px; padding-left: 1px; box-shadow: inset -1px -1px #d3d9df; }
.tint .text { background: #f8fafc; }
u { text-decoration: underline wavy #d92b2b 1px; text-underline-offset: -1px; text-decoration-skip-ink: none; }

/* Scroll bars */
.vscroll { width: 9px; padding: 5px 2px; background: #cbcbcb; border-top: 2px solid #444; }
.vthumb { height: 35%; border-radius: 3px; background: #808080; }
.hscroll { flex: none; height: 10px; padding-right: 9px; }
.htrack { height: 10px; padding: 2px; background: #cbcbcb; border-right: 2px solid #555; }
.hthumb { width: 47%; height: 6px; border-radius: 3px; background: #7f7f7f; }

/* Sheet tabs */
.tabs { flex: none; display: flex; align-items: center; height: 15px; padding-left: 6px; font-size: 8px; }
.tabnav { width: 60px; height: 14px; margin-right: 8px; }
.addtab { width: 14px; height: 14px; margin-right: 4px; }
.addtab svg { width: 14px; height: 14px; }
.tab { padding: 0 10px; border-right: 1px solid #cfcfcd; line-height: 10px; }
.tab:nth-last-child(2) { border: 0; }
.tab.current { padding: 2px 8px 1px; border: 0; border-bottom: 2px solid #8a8a8a; background: #fff; font-weight: bold; color: #222; }

/* Sidebar */
.sidebar {
  position: relative;
  flex: none;
  width: 39px;
  padding-top: 5px;
  border-left: 1px solid #c9c9c7;
  display: flex;
  flex-direction: column;
  align-items: center;
  gap: 11px;
}
.deck { width: 18px; height: 18px; }
.deck svg { width: 18px; height: 18px; }
.menu { margin-bottom: 2px; }
.grip { position: absolute; left: -1px; top: 269px; width: 5px; height: 50px; background: #8e9190; display: grid; place-items: center; }
.grip::before { content: ""; border: 2px solid transparent; border-left-color: #fff; border-right: 0; }

/* Status bar */
.status { flex: none; display: flex; height: 18px; border-top: 1px solid #cfcfcd; padding-top: 1px; font-size: 8px; line-height: 16px; }
.status > span { border-right: 1px solid #e4e4e2; padding-left: 7px; }
.status .s-save { width: 20px; padding: 2px 0 0 6px; }
.s-save svg { width: 12px; height: 12px; }
.s-sheet { width: 155px; }
.s-sel { width: 219px; }
.s-style { width: 213px; }
.s-lang { flex: 1; text-align: center; }
.s-insert { width: 46px; }
.s-mode { width: 31px; padding-top: 2px; }
.s-mode svg { width: 20px; height: 12px; }
.s-small { width: 20px; }
.s-sum { width: 180px; text-align: center; }
.status .s-zoom { width: 95px; padding: 0 3px; display: flex; align-items: center; gap: 2px; }
.s-zoom button { font-size: 14px; font-weight: bold; line-height: 14px; width: 9px; color: #222; }
.s-zoom input { flex: 1; min-width: 0; height: 12px; margin: 0; appearance: none; background: linear-gradient(#aaa, #aaa) center / 100% 1px no-repeat; }
.s-zoom input::-webkit-slider-thumb { appearance: none; width: 3px; height: 7px; border: 1px solid #555; background: #f5f5f3; }
.status .s-pct { width: 33px; padding-left: 5px; border: 0; }
```
